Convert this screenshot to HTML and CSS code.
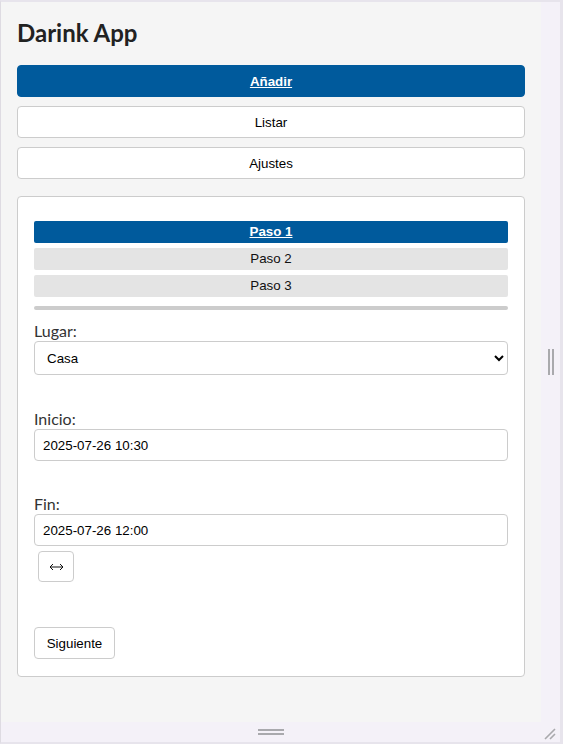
FILE: index.html
```html
<!DOCTYPE html>
<html lang="es">
<head>
<meta charset="utf-8">
<title>Darink App</title>
<link rel="stylesheet" href="styles.css">
</head>
<body>
<div class="frame">
  <main class="app">
    <h1 class="title">Darink App</h1>
    <nav class="menu">
      <button class="menu-btn active">Añadir</button>
      <button class="menu-btn">Listar</button>
      <button class="menu-btn">Ajustes</button>
    </nav>
    <section class="card">
      <div class="steps">
        <div class="step active">Paso 1</div>
        <div class="step">Paso 2</div>
        <div class="step">Paso 3</div>
      </div>
      <div class="progress"></div>
      <div class="field first">
        <label class="label" for="lugar">Lugar:</label>
        <select id="lugar" class="control select">
          <option>Casa</option>
        </select>
      </div>
      <div class="field">
        <label class="label" for="inicio">Inicio:</label>
        <input id="inicio" class="control input" type="text" value="2025-07-26 10:30">
      </div>
      <div class="field tight">
        <label class="label" for="fin">Fin:</label>
        <input id="fin" class="control input" type="text" value="2025-07-26 12:00">
      </div>
      <button class="swap" aria-label="↔"><svg width="15" height="8" viewBox="0 0 15 8"><path d="M1 4 H14 M4 1 L1 4 L4 7 M11 1 L14 4 L11 7" stroke="#111" stroke-width="1" fill="none"/></svg></button>
      <button class="next">Siguiente</button>
    </section>
  </main>
  <div class="vstrip"><span class="bar"></span><span class="bar"></span></div>
  <div class="hstrip"><span class="hbar"></span><span class="hbar"></span></div>
  <div class="corner">
    <svg width="14" height="14" viewBox="0 0 14 14"><path d="M12 2 L2 12 M12 7 L7 12" stroke="#a9a9ad" stroke-width="1.6" fill="none"/></svg>
  </div>
</div>
</body>
</html>
```
FILE: styles.css
```css
* { box-sizing: border-box; }
html, body { margin: 0; padding: 0; background: #f4f1f8; }
.frame {
  width: 563px;
  height: 744px;
  border-top: 2px solid #e7e4ec;
  border-left: 1px solid #dedbe2;
  border-right: 3px solid #e7e4ec;
  border-bottom: 2px solid #e7e4ec;
  display: grid;
  grid-template-columns: 540px 19px;
  grid-template-rows: 720px 20px;
  background: #f4f1f8;
}
.app {
  background: #f5f5f5;
  padding: 16px;
  overflow: hidden;
  font-family: Lato, "Open Sans", sans-serif;
  color: #222;
}
.title {
  margin: 0 0 18px;
  font-size: 24px;
  line-height: 29px;
  font-weight: 700;
  color: #222;
}
.menu { display: flex; flex-direction: column; gap: 9px; }
.menu-btn {
  height: 32px;
  background: #fff;
  border: 1px solid #cccccc;
  border-radius: 4px;
  font-family: "Liberation Sans", Arial, sans-serif;
  font-size: 13.333px;
  color: #000;
  padding: 0;
}
.menu-btn.active {
  background: #005a9c;
  border-color: #005a9c;
  color: #fff;
  font-weight: 700;
  text-decoration: underline;
}
.card {
  margin-top: 17px;
  background: #fff;
  border: 1px solid #cccccc;
  border-radius: 4px;
  padding: 24px 16px 17px;
  display: flex;
  flex-direction: column;
  align-items: flex-start;
}
.steps { display: flex; flex-direction: column; gap: 5px; width: 100%; }
.step {
  height: 22px;
  line-height: 22px;
  text-align: center;
  background: #e4e4e4;
  border-radius: 2px;
  font-family: "Liberation Sans", Arial, sans-serif;
  font-size: 13.333px;
  color: #111;
}
.step.active {
  background: #005a9c;
  color: #fff;
  font-weight: 700;
  text-decoration: underline;
}
.progress {
  width: 100%;
  height: 4px;
  margin-top: 9px;
  background: #cccccc;
  border-radius: 2px;
}
.field { width: 100%; margin-top: 33px; }
.field.first { margin-top: 10px; }
.field.tight { margin-top: 32px; }
.label {
  display: block;
  font-size: 16px;
  line-height: 21px;
  color: #333;
}
.control {
  display: block;
  width: 100%;
  border: 1px solid #cccccc;
  border-radius: 4px;
  background: #fff;
  font-family: "Liberation Sans", Arial, sans-serif;
  font-size: 13.333px;
  color: #000;
  margin: 0;
}
.select { height: 34px; padding: 0 8px; }
.input { height: 32px; padding: 0 8px; }
.swap {
  margin: 5px 0 0 4px;
  width: 36px;
  height: 31px;
  background: #fff;
  border: 1px solid #cccccc;
  border-radius: 4px;
  padding: 0;
  display: flex;
  align-items: center;
  justify-content: center;
}
.swap svg { display: block; }
.next {
  margin-top: 45px;
  width: 81px;
  height: 32px;
  background: #fff;
  border: 1px solid #cccccc;
  border-radius: 4px;
  font-family: "Liberation Sans", Arial, sans-serif;
  font-size: 13.333px;
  color: #000;
  padding: 0;
}
.vstrip {
  display: flex;
  align-items: center;
  justify-content: flex-start;
  gap: 2px;
  padding-left: 7px;
}
.bar { width: 2px; height: 26px; background: #a9a9ad; }
.hstrip {
  display: flex;
  flex-direction: column;
  align-items: center;
  justify-content: center;
  gap: 2px;
}
.hbar { width: 26px; height: 2px; background: #a9a9ad; }
.corner { display: flex; align-items: flex-end; justify-content: flex-start; padding: 0 0 1px 2px; }
.corner svg { display: block; }
```
